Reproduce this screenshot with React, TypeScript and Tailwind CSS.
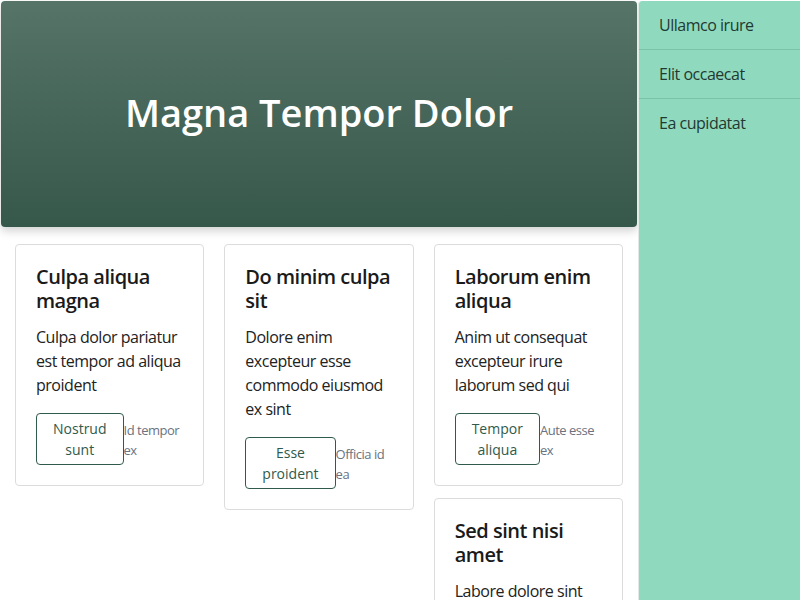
import React from "react";

interface Card {
  title: string;
  body: string;
  action?: string;
  note?: string;
}

const columns: Card[][] = [
  [
    {
      title: "Culpa aliqua magna",
      body: "Culpa dolor pariatur est tempor ad aliqua proident",
      action: "Nostrud sunt",
      note: "Id tempor ex",
    },
  ],
  [
    {
      title: "Do minim culpa sit",
      body: "Dolore enim excepteur esse commodo eiusmod ex sint",
      action: "Esse proident",
      note: "Officia id ea",
    },
  ],
  [
    {
      title: "Laborum enim aliqua",
      body: "Anim ut consequat excepteur irure laborum sed qui",
      action: "Tempor aliqua",
      note: "Aute esse ex",
    },
    {
      title: "Sed sint nisi amet",
      body: "Labore dolore sint magna ipsum cillum aute",
      action: "Irure ad",
      note: "Ut enim",
    },
  ],
];

const menu = ["Ullamco irure", "Elit occaecat", "Ea cupidatat"];

const CardItem = ({ title, body, action, note }: Card) => (
  <div className="bg-white border border-[#dcdcdc] rounded-[4px] p-5 tracking-[-0.03em]">
    <h3 className="text-[20px] leading-6 font-semibold text-[#1a1a1a]">{title}</h3>
    <p className="mt-3 text-[16px] leading-6 text-[#222]">{body}</p>
    {action && (
      <div className="mt-4 flex items-start">
        <button className="w-min shrink-0 border border-[#2f5a4c] rounded-[4px] px-4 py-[4px] text-[14px] leading-[21px] tracking-normal text-[#2f5a4c]">
          {action}
        </button>
        <span className="mt-[7px] flex-1 text-[13px] leading-5 text-[#6b7280]">{note}</span>
      </div>
    )}
  </div>
);

export default function App() {
  return (
    <div
      className="flex h-[600px] overflow-hidden bg-white pt-px"
      style={{ fontFamily: '"Open Sans", "Noto Sans", sans-serif' }}
    >
      <main className="flex-1">
        <header className="ml-px h-[226px] w-[636px] rounded-[4px] bg-gradient-to-b from-[#567468] to-[#36584a] shadow-[0_4px_10px_rgba(0,0,0,0.18)] flex items-center justify-center">
          <h1 className="-mt-1 text-[38px] font-semibold text-white">Magna Tempor Dolor</h1>
        </header>
        <div className="pl-[15px] pr-[15px] pt-[17px] grid grid-cols-3 gap-5 items-start">
          {columns.map((col, i) => (
            <div key={i} className="flex flex-col gap-3">
              {col.map((c) => (
                <CardItem key={c.title} {...c} />
              ))}
            </div>
          ))}
        </div>
      </main>
      <aside className="w-[162px] bg-[#8fd9bf] border-l border-[#e2e8e5] rounded-tl-[4px] tracking-[-0.03em]">
        {menu.map((m, i) => (
          <div
            key={m}
            className={`px-5 py-3 text-[16px] leading-6 text-[#1f3a31] ${i < menu.length - 1 ? "border-b border-[#7cc2a9]" : ""}`}
          >
            {m}
          </div>
        ))}
      </aside>
    </div>
  );
}
